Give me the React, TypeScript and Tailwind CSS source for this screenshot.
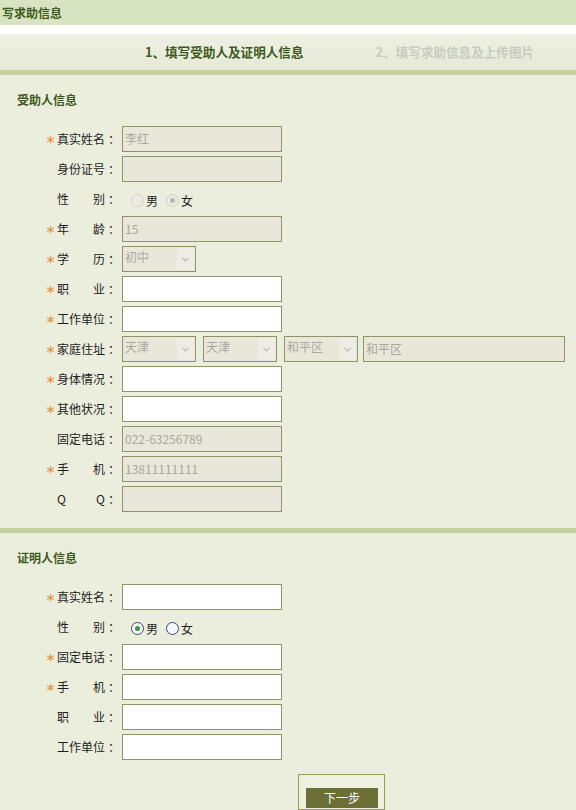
import React from "react";

type Row =
  | { kind: "input"; label: string; req?: boolean; value?: string; disabled?: boolean }
  | { kind: "gender"; label: string; req?: boolean; checked: "男" | "女"; disabled?: boolean }
  | { kind: "select"; label: string; req?: boolean; value: string }
  | { kind: "address"; label: string; req?: boolean };

const font = "font-['SimSun','Noto_Sans_CJK_SC',sans-serif]";

const helpee: Row[] = [
  { kind: "input", label: "真实姓名", req: true, value: "李红", disabled: true },
  { kind: "input", label: "身份证号", disabled: true },
  { kind: "gender", label: "性别", checked: "女", disabled: true },
  { kind: "input", label: "年龄", req: true, value: "15", disabled: true },
  { kind: "select", label: "学历", req: true, value: "初中" },
  { kind: "input", label: "职业", req: true },
  { kind: "input", label: "工作单位", req: true },
  { kind: "address", label: "家庭住址", req: true },
  { kind: "input", label: "身体情况", req: true },
  { kind: "input", label: "其他状况", req: true },
  { kind: "input", label: "固定电话", value: "022-63256789", disabled: true },
  { kind: "input", label: "手机", req: true, value: "13811111111", disabled: true },
  { kind: "input", label: "QQ", disabled: true },
];

const witness: Row[] = [
  { kind: "input", label: "真实姓名", req: true },
  { kind: "gender", label: "性别", checked: "男" },
  { kind: "input", label: "固定电话", req: true },
  { kind: "input", label: "手机", req: true },
  { kind: "input", label: "职业" },
  { kind: "input", label: "工作单位" },
];

function Label({ text, req }: { text: string; req?: boolean }) {
  const chars = text.split("");
  return (
    <div className="flex items-center pl-[44px] w-[122px] shrink-0">
      <span className="w-[13px] h-[12px] text-[#e08a2c] text-[16px] leading-[20px] flex justify-center font-['DejaVu_Sans',sans-serif]">
        {req ? "*" : ""}
      </span>
      <span className="w-[48px] flex justify-between text-[12px] text-[#1e1e1e]">
        {chars.map((c, i) => (
          <span key={i}>{c}</span>
        ))}
      </span>
      <span className="w-[17px] text-[12px] text-[#1e1e1e] pl-[3px]">：</span>
    </div>
  );
}

function TextBox({ value, disabled, w = "w-[160px]" }: { value?: string; disabled?: boolean; w?: string }) {
  return (
    <div
      className={`${w} h-[26px] border border-[#8c9468] flex items-center px-[2px] text-[12px] ${
        disabled ? "bg-[#e9e7d9] text-[#a8a8a0]" : "bg-white text-[#222]"
      }`}
    >
      {value}
    </div>
  );
}

function Select({ value, w = "w-[74px]" }: { value: string; w?: string }) {
  return (
    <div className={`${w} h-[26px] border border-[#8c9468] bg-[#e9e7d9] flex items-stretch`}>
      <span className="flex-1 text-[12px] text-[#a8a8a0] pl-[2px] pt-[1px]">{value}</span>
      <span className="w-[17px] my-[1px] mr-[1px] bg-[#eeede5] flex items-center justify-center">
        <svg width="7" height="5" viewBox="0 0 7 5">
          <path d="M0.5 0.8 L3.5 3.8 L6.5 0.8" stroke="#b8b8b0" strokeWidth="1.2" fill="none" />
        </svg>
      </span>
    </div>
  );
}

function Radio({ on, disabled }: { on: boolean; disabled?: boolean }) {
  return (
    <span
      className={`w-[13px] h-[13px] rounded-full border flex items-center justify-center ${
        disabled ? "border-[#d0d0c4] bg-[#ecebe2]" : "border-[#2f4f7a] bg-[#f4f6f8]"
      }`}
    >
      {on && (
        <span className={`w-[5px] h-[5px] rounded-full ${disabled ? "bg-[#b8b8b0]" : "bg-[#3c9a3c]"}`} />
      )}
    </span>
  );
}

function FormRow({ row }: { row: Row }) {
  return (
    <div className="flex items-center h-[30px]">
      <Label text={row.label} req={row.req} />
      {row.kind === "input" && <TextBox value={row.value} disabled={row.disabled} />}
      {row.kind === "select" && <Select value={row.value} />}
      {row.kind === "address" && (
        <div className="flex gap-[7px]">
          <Select value="天津" />
          <Select value="天津" />
          <div className="mr-[-2px]">
            <Select value="和平区" />
          </div>
          <TextBox value="和平区" disabled w="w-[202px]" />
        </div>
      )}
      {row.kind === "gender" && (
        <div className="flex items-center pl-[9px] pt-[3px] text-[12px] text-[#1e1e1e]">
          <Radio on={row.checked === "男"} disabled={row.disabled} />
          <span className="ml-[2px] mr-[8px]">男</span>
          <Radio on={row.checked === "女"} disabled={row.disabled} />
          <span className="ml-[2px]">女</span>
        </div>
      )}
    </div>
  );
}

function Section({ title, rows }: { title: string; rows: Row[] }) {
  return (
    <div className="pt-[17px]">
      <h3 className="pl-[17px] text-[12px] font-bold text-[#3d5a1c] leading-[16px] mb-[16px]">{title}</h3>
      {rows.map((r, i) => (
        <FormRow key={i} row={r} />
      ))}
    </div>
  );
}

export default function App() {
  return (
    <div className={`w-[576px] h-[810px] overflow-hidden bg-[#ebeddd] ${font}`}>
      <div className="h-[25px] bg-[#d7e3c1] flex items-center pl-[2px]">
        <h2 className="text-[12px] font-bold text-[#3d5a1c]">写求助信息</h2>
      </div>
      <div className="h-[9px] bg-white" />
      <div className="h-[36px] bg-gradient-to-b from-[#eef0e4] to-[#e6e9d6] flex items-center pl-[145px] text-[12.6px] font-bold">
        <span className="text-[#3d5a1c]">1、填写受助人及证明人信息</span>
        <span className="ml-[72px] text-[#c8cbc0]">2、填写求助信息及上传图片</span>
      </div>
      <div className="h-[5px] bg-[#c6cf9f]" />
      <div className="pb-[14px]">
        <Section title="受助人信息" rows={helpee} />
      </div>
      <div className="h-[5px] bg-[#c6cf9f]" />
      <Section title="证明人信息" rows={witness} />
      <div className="flex pt-[12px] pl-[298px]">
        <div className="w-[87px] h-[36px] border border-[#9a9a50] bg-[#eef0e2] pt-[9px] pl-[7px]">
          <button className="w-[72px] h-[20px] bg-[#6b6f35] text-white text-[12px] leading-[20px]">下一步</button>
        </div>
      </div>
    </div>
  );
}
